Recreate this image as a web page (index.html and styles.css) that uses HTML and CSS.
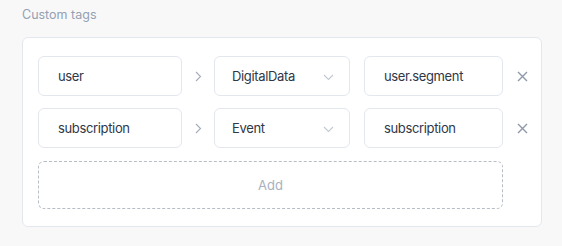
FILE: index.html
```html
<!DOCTYPE html>
<html>
<head>
<meta charset="utf-8">
<link rel="stylesheet" href="styles.css">
</head>
<body>
<div class="wrap">
  <div class="title">Custom tags</div>
  <div class="card">
    <div class="row">
      <div class="field f1">user</div>
      <div class="arrow"><svg width="7" height="11" viewBox="0 0 7 11"><path d="M1 1l4.5 4.5L1 10" fill="none" stroke="#a3acbb" stroke-width="1.1"/></svg></div>
      <div class="field sel">DigitalData<svg class="caret" width="11" height="7" viewBox="0 0 11 7"><path d="M1 1l4.5 4.5L10 1" fill="none" stroke="#c3c9d3" stroke-width="1.1"/></svg></div>
      <div class="field f3">user.segment</div>
      <div class="close"><svg width="11" height="11" viewBox="0 0 11 11"><path d="M1 1l9 9M10 1l-9 9" stroke="#8e98a8" stroke-width="1.4"/></svg></div>
    </div>
    <div class="row">
      <div class="field f1">subscription</div>
      <div class="arrow"><svg width="7" height="11" viewBox="0 0 7 11"><path d="M1 1l4.5 4.5L1 10" fill="none" stroke="#a3acbb" stroke-width="1.1"/></svg></div>
      <div class="field sel">Event<svg class="caret" width="11" height="7" viewBox="0 0 11 7"><path d="M1 1l4.5 4.5L10 1" fill="none" stroke="#c3c9d3" stroke-width="1.1"/></svg></div>
      <div class="field f3">subscription</div>
      <div class="close"><svg width="11" height="11" viewBox="0 0 11 11"><path d="M1 1l9 9M10 1l-9 9" stroke="#8e98a8" stroke-width="1.4"/></svg></div>
    </div>
    <div class="add">Add</div>
  </div>
</div>
</body>
</html>
```

FILE: styles.css
```css
html, body {
  margin: 0;
  padding: 0;
  background: #f8f8f9;
  font-family: Inter, Lato, sans-serif;
}
.wrap {
  padding: 7px 20px 0 22px;
}
.title {
  font-size: 12.5px;
  color: #94a0b3;
  height: 30px;
  line-height: 16px;
}
.card {
  width: 520px;
  box-sizing: border-box;
  background: #fff;
  border: 1px solid #e3e7ee;
  border-radius: 6px;
  padding: 18px 0 17px 15px;
  display: flex;
  flex-direction: column;
  gap: 12px;
}
.row {
  display: flex;
  align-items: center;
  height: 40px;
}
.field {
  box-sizing: border-box;
  height: 40px;
  border: 1px solid #e3e7ee;
  border-radius: 6px;
  display: flex;
  align-items: center;
  font-size: 13px;
  letter-spacing: -0.35px;
  color: #2f3747;
}
.f1 { width: 144px; padding-left: 19px; }
.arrow { width: 32px; display: flex; justify-content: center; padding-left: 1px; box-sizing: border-box; }
.arrow svg { display: block; }
.sel { width: 136px; padding: 0 15px 0 17px; justify-content: space-between; }
.caret { display: block; margin-top: 2px; }
.f3 { width: 139px; margin-left: 14px; padding-left: 19px; }
.close { width: 38px; display: flex; justify-content: center; }
.close svg { display: block; }
.add {
  box-sizing: border-box;
  width: 465px;
  height: 48px;
  margin-top: 1px;
  border: 1px dashed #b7bdc7;
  border-radius: 6px;
  display: flex;
  align-items: center;
  justify-content: center;
  font-size: 13px;
  color: #a9b1be;
}
```
